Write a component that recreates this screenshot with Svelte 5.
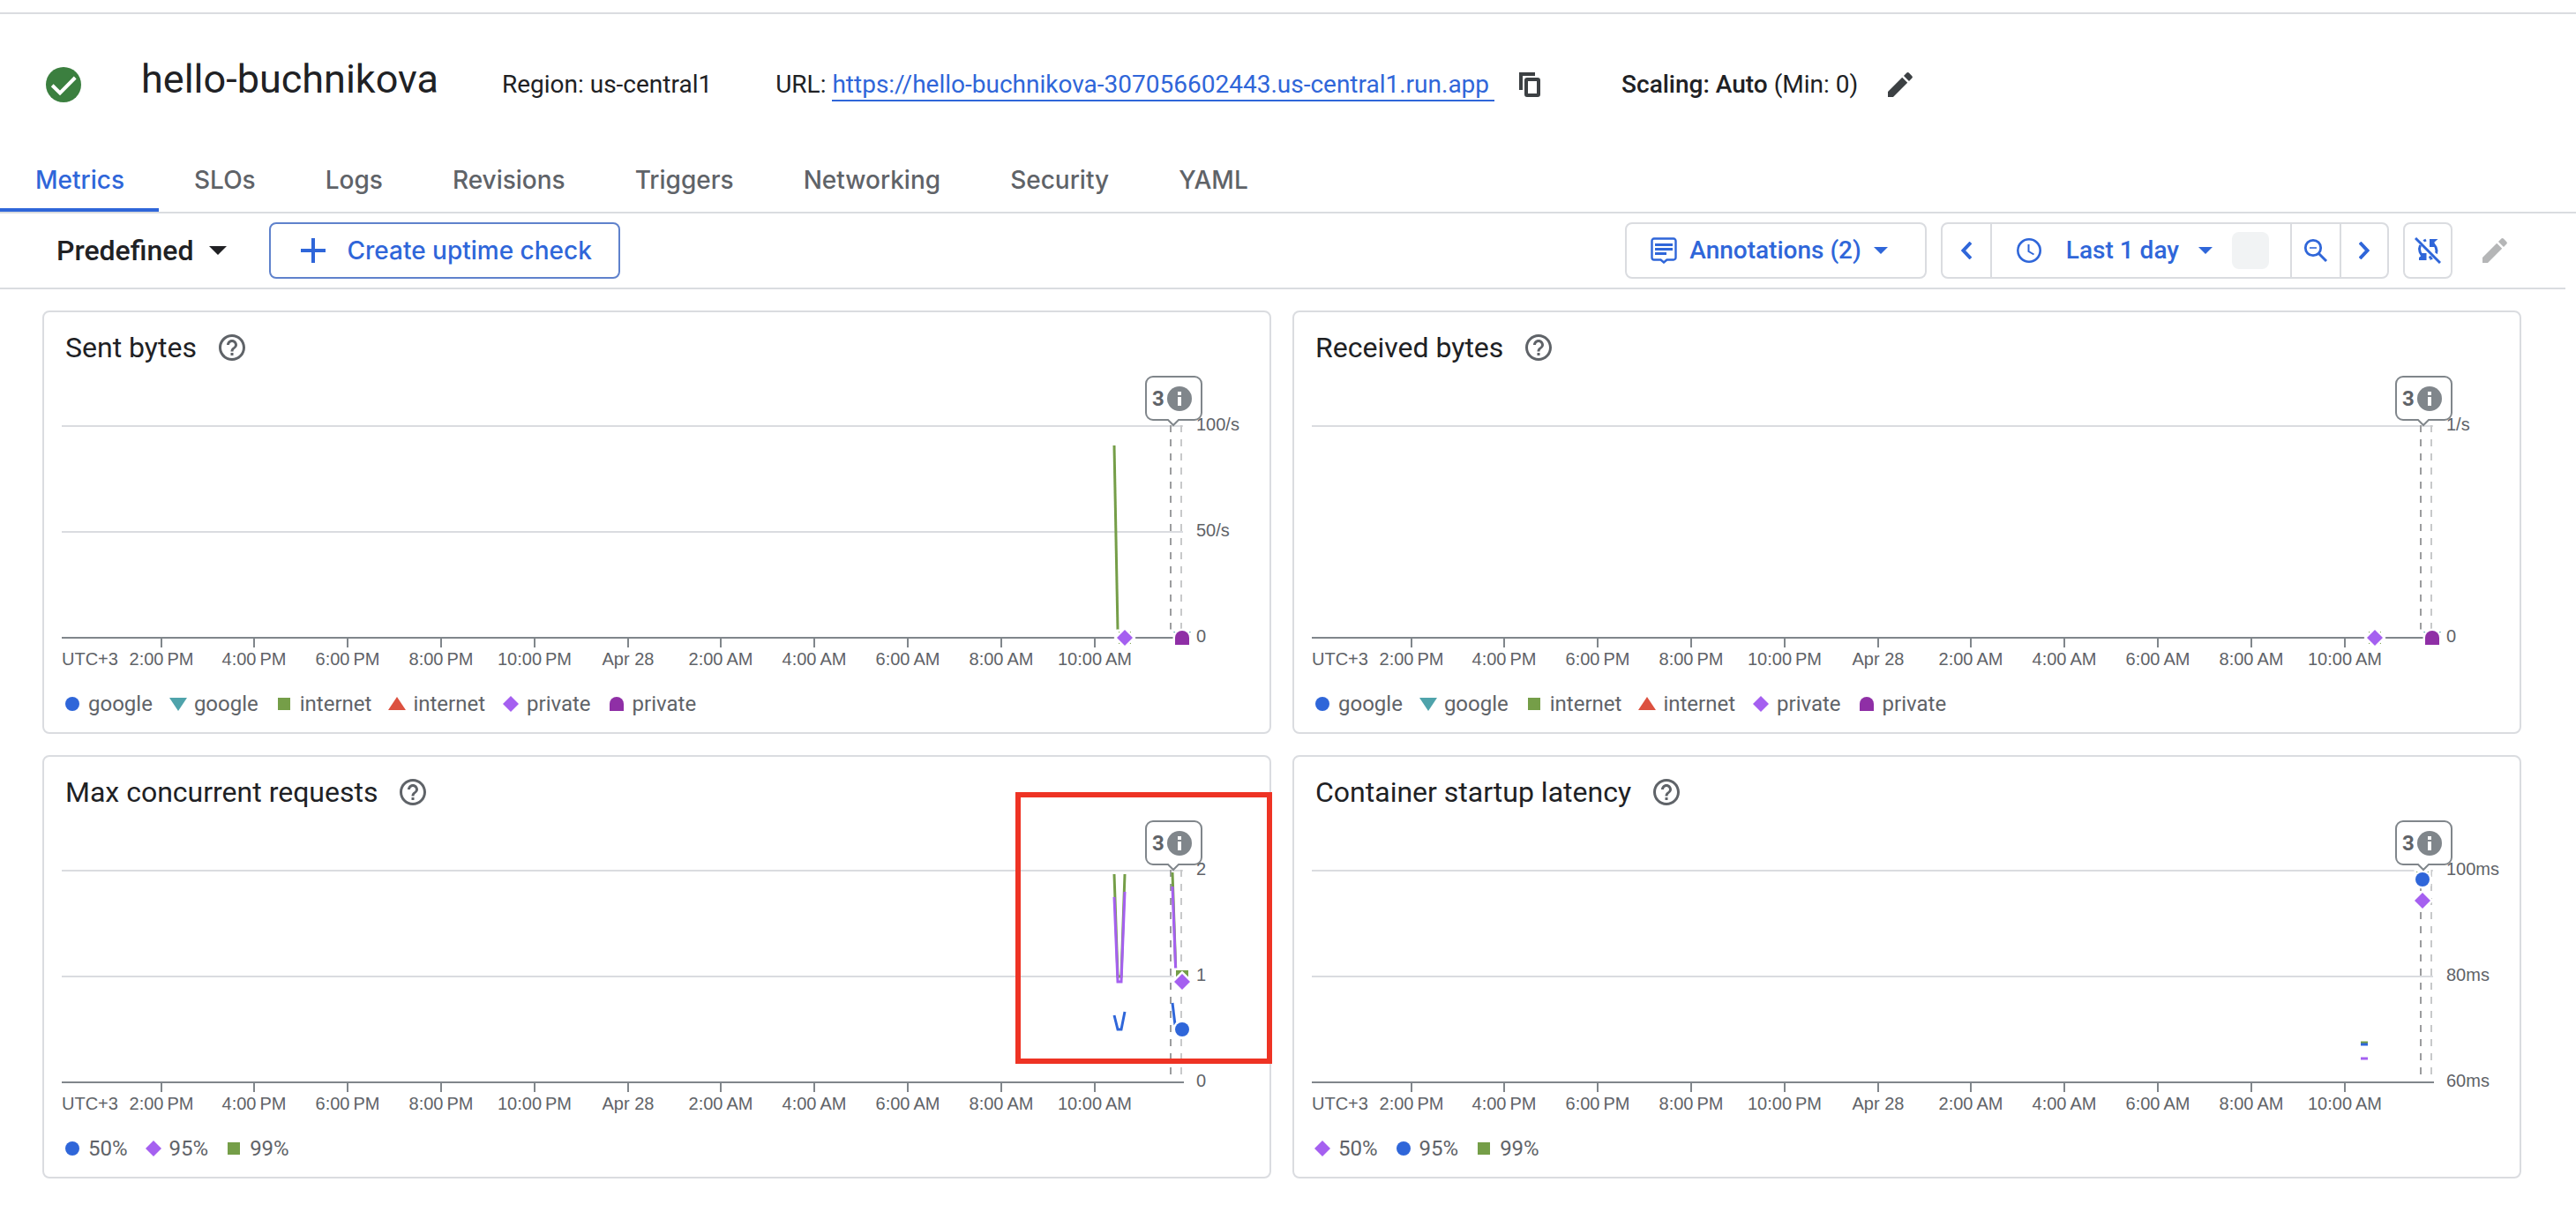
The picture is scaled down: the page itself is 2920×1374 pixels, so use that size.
<script>
  const tabs = ['Metrics', 'SLOs', 'Logs', 'Revisions', 'Triggers', 'Networking', 'Security', 'YAML'];
  let active = $state('Metrics');

  const blue = '#2f66d9';
  const teal = '#4fa3ab';
  const green = '#759e48';
  const red = '#dc5140';
  const violet = '#a560f0';
  const plum = '#8f2fa6';

  const hours = ['2:00', '4:00', '6:00', '8:00', '10:00', 'Apr 28', '2:00', '4:00', '6:00', '8:00', '10:00'];
  const ticks = hours.map((h, i) => ({
    x: 133 + Math.floor(i * 105.8),
    label: i === 5 ? h : `${h}\u202f${i < 5 ? 'PM' : 'AM'}`
  }));

  const traffic = [
    { shape: 'circle', color: blue, label: 'google' },
    { shape: 'down', color: teal, label: 'google' },
    { shape: 'square', color: green, label: 'internet' },
    { shape: 'up', color: red, label: 'internet' },
    { shape: 'diamond', color: violet, label: 'private' },
    { shape: 'arch', color: plum, label: 'private' }
  ];

  const idle = [
    { shape: 'square', color: green, x: 1225, y: 303 },
    { shape: 'diamond', color: violet, x: 1225, y: 303 },
    { shape: 'down', color: teal, x: 1290, y: 303 },
    { shape: 'arch', color: plum, x: 1290, y: 303 }
  ];

  const charts = [
    {
      title: 'Sent bytes',
      rows: ['100/s', '50/s', '0'],
      lines: [{ color: green, points: '1213,85 1217,294' }],
      marks: idle,
      legend: traffic
    },
    {
      title: 'Received bytes',
      rows: ['1/s', '', '0'],
      lines: [],
      marks: idle,
      legend: traffic
    },
    {
      title: 'Max concurrent requests',
      rows: ['2', '1', '0'],
      lines: [
        { color: green, points: '1213,67 1217,183 1221,183 1225,67' },
        { color: green, points: '1279,65 1283,183 1290,183' },
        { color: violet, points: '1213,93 1217,189 1221,189 1225,87' },
        { color: violet, points: '1279,81 1283,184' },
        { color: blue, points: '1213,227 1217,243 1221,243 1225,223' },
        { color: blue, points: '1279,213 1282,238' }
      ],
      marks: [
        { shape: 'square', color: green, x: 1290, y: 183 },
        { shape: 'diamond', color: violet, x: 1290, y: 189 },
        { shape: 'circle', color: blue, x: 1290, y: 243 }
      ],
      legend: [
        { shape: 'circle', color: blue, label: '50%' },
        { shape: 'diamond', color: violet, label: '95%' },
        { shape: 'square', color: green, label: '99%' }
      ],
      highlight: true
    },
    {
      title: 'Container startup latency',
      rows: ['100ms', '80ms', '60ms'],
      lines: [
        { color: green, points: '1209,258 1217,258' },
        { color: blue, points: '1209,260 1217,260' },
        { color: violet, points: '1209,276 1217,276' }
      ],
      marks: [
        { shape: 'square', color: green, x: 1279, y: 71 },
        { shape: 'circle', color: blue, x: 1279, y: 73 },
        { shape: 'diamond', color: violet, x: 1279, y: 97 }
      ],
      legend: [
        { shape: 'diamond', color: violet, label: '50%' },
        { shape: 'circle', color: blue, label: '95%' },
        { shape: 'square', color: green, label: '99%' }
      ]
    }
  ];
</script>

{#snippet marker(shape, color, x, y)}
  <g transform="translate({x} {y})" fill={color}>
    {#if shape === 'circle'}
      <circle r="8" />
    {:else if shape === 'square'}
      <rect x="-7" y="-7" width="14" height="14" />
    {:else if shape === 'diamond'}
      <path d="M0-9L9 0L0 9L-9 0Z" />
    {:else if shape === 'down'}
      <path d="M-10-7H10L0 8Z" />
    {:else if shape === 'up'}
      <path d="M-10 7H10L0-8Z" />
    {:else}
      <path d="M-8 8V0A8 8 0 0 1 8 0V8Z" />
    {/if}
  </g>
{/snippet}

{#snippet pencil()}
  <svg class="icon" viewBox="0 0 18 18" aria-hidden="true">
    <path d="M2 13v3h3l8.1-8.1-3-3zM15.7 5.300a.9.9 0 0 0 0-1.200L13.900 2.300a.9.9 0 0 0-1.200 0L11 4l3 3z" />
  </svg>
{/snippet}

<div class="page">
  <div class="strip"></div>

  <header>
    <svg class="status" viewBox="0 0 24 24" role="img" aria-label="Healthy">
      <circle cx="12" cy="12" r="10" fill="#3b7f3f" />
      <path d="M5.600 12.400L10 16.700L18.600 8" fill="none" stroke="#fff" stroke-width="2" />
    </svg>
    <h1>hello-buchnikova</h1>
    <p class="region">Region: us-central1</p>
    <p class="url">URL: <a href="https://hello-buchnikova-307056602443.us-central1.run.app">https://hello-buchnikova-307056602443.us-central1.run.app</a></p>
    <button class="plain copy" aria-label="Copy URL">
      <svg width="24" height="28" viewBox="0 0 24 28" fill="none" stroke="#3c4043" aria-hidden="true">
        <path d="M2 20V2H18" stroke-width="4" />
        <rect x="8" y="8" width="14" height="18" rx="1" stroke-width="4" />
      </svg>
    </button>
    <p class="scaling"><b>Scaling: Auto</b> (Min: 0)</p>
    <button class="plain edit" aria-label="Edit scaling">{@render pencil()}</button>
  </header>

  <nav>
    {#each tabs as tab}
      <button class="tab" class:active={tab === active} onclick={() => (active = tab)}>{tab}</button>
    {/each}
  </nav>

  <div class="toolbar">
    <button class="plain predefined">
      Predefined
      <svg width="20" height="10" viewBox="0 0 20 10" aria-hidden="true"><path d="M0 0H20L10 10Z" /></svg>
    </button>
    <button class="box create">
      <svg width="28" height="28" viewBox="0 0 28 28" aria-hidden="true"><path d="M12 0h4v12h12v4H16v12h-4V16H0v-4h12z" /></svg>
      Create uptime check
    </button>

    <button class="box annotations">
      <svg width="30" height="30" viewBox="0 0 30 30" fill="none" stroke="currentColor" aria-hidden="true">
        <path d="M4 1.500H26A2.500 2.500 0 0 1 28.500 4V23A2.500 2.500 0 0 1 26 25.500H18.500L15 28.500L11.500 25.500H4A2.500 2.500 0 0 1 1.500 23V4A2.500 2.500 0 0 1 4 1.500Z" stroke-width="2.400" />
        <path d="M5 8.500H25M5 13.500H25M5 18.500H18" stroke-width="3" />
      </svg>
      Annotations (2)
      <svg class="caret" width="16" height="8" viewBox="0 0 16 8" aria-hidden="true"><path d="M0 0H16L8 8Z" /></svg>
    </button>

    <div class="box range">
      <button class="seg" aria-label="Earlier">
        <svg width="12" height="20" viewBox="0 0 12 20" fill="none" stroke="currentColor" stroke-width="4" aria-hidden="true"><path d="M11 1L2.500 10L11 19" /></svg>
      </button>
      <button class="seg span">
        <svg width="28" height="28" viewBox="0 0 28 28" fill="none" stroke="currentColor" aria-hidden="true">
          <circle cx="14" cy="14" r="12.700" stroke-width="2.600" />
          <path d="M13.500 7V15L19.500 18.500" stroke-width="2" />
        </svg>
        <span>Last 1 day</span>
        <svg class="caret" width="16" height="8" viewBox="0 0 16 8" aria-hidden="true"><path d="M0 0H16L8 8Z" /></svg>
        <i class="chip"></i>
      </button>
      <button class="seg" aria-label="Zoom out">
        <svg width="28" height="28" viewBox="0 0 28 28" fill="none" stroke="currentColor" aria-hidden="true">
          <circle cx="11" cy="11" r="8.700" stroke-width="2.800" />
          <path d="M17 17L26 26" stroke-width="3" />
          <path d="M7 11H15" stroke-width="1.600" />
        </svg>
      </button>
      <button class="seg" aria-label="Later">
        <svg width="12" height="20" viewBox="0 0 12 20" fill="none" stroke="currentColor" stroke-width="4" aria-hidden="true"><path d="M1 1L9.500 10L1 19" /></svg>
      </button>
    </div>

    <button class="box sync" aria-label="Auto refresh off">
      <svg width="30" height="30" viewBox="0 0 30 30" fill="none" stroke="currentColor" aria-hidden="true">
        <path d="M6.500 9A10.500 10.500 0 0 0 11 22.500M10 4.500L13 3M19 6A10.500 10.500 0 0 1 24.500 18.500M17.500 24L18 21.500" stroke-width="3" />
        <path d="M17 2H26.500L22.500 5.500V11H17ZM5 26V23L8 20.500L5.500 18H13.500V26Z" fill="currentColor" stroke="none" />
        <path d="M17.500 20.500V26L21 24.500Z" fill="currentColor" stroke="none" />
        <path d="M3.500 -1L31 26.500" stroke="#fff" stroke-width="2" />
        <path d="M1 1L29 29" stroke-width="3" />
      </svg>
    </button>
    <button class="plain edit off" aria-label="Edit dashboard" disabled>{@render pencil()}</button>
  </div>

  <main>
    {#each charts as chart}
      <section class="card">
        <div class="head">
          <h2>{chart.title}</h2>
          <button class="plain help" aria-label="About {chart.title}">
            <svg class="icon" viewBox="0 0 24 24" aria-hidden="true"><path d="M11 18h2v-2h-2v2zm1-16C6.480 2 2 6.480 2 12s4.480 10 10 10 10-4.480 10-10S17.520 2 12 2zm0 18c-4.410 0-8-3.590-8-8s3.590-8 8-8 8 3.590 8 8-3.590 8-8 8zm0-14c-2.210 0-4 1.790-4 4h2c0-1.100.9-2 2-2s2 .9 2 2c0 2-3 1.750-3 5h2c0-2.250 3-2.500 3-5 0-2.210-1.790-4-4-4z" /></svg>
          </button>
        </div>

        <svg class="plot" viewBox="0 0 1389 350" role="img" aria-label="{chart.title} chart">
          {#each chart.rows as row, i}
            {#if row && i < 2}
              <path class="grid" d="M20 {63 + i * 120}H1291" />
            {/if}
          {/each}
          <path class="axis" d="M20 303H1292" />
          {#each ticks as tick}
            <path class="axis" d="M{tick.x} 304V314" />
            <text x={tick.x} y="334" text-anchor="middle">{tick.label}</text>
          {/each}
          <text x="20" y="334">UTC+3</text>

          <path class="dash" d="M1277 62V294" />
          <path class="dash light" d="M1289 62V294" />

          {#each chart.lines as line}
            <polyline points={line.points} fill="none" stroke={line.color} stroke-width="3" />
          {/each}
          {#each chart.marks as m}
            <g class="halo">{@render marker(m.shape, m.color, m.x, m.y)}</g>
          {/each}

          <path class="callout" d="M1257 7H1304A8 8 0 0 1 1312 15V48A8 8 0 0 1 1304 56H1286L1280 62L1274 56H1257A8 8 0 0 1 1249 48V15A8 8 0 0 1 1257 7Z" />
          <text class="count" x="1256" y="40">3</text>
          <circle cx="1287" cy="32" r="14" fill="#80868b" />
          <path d="M1285 24h4v4h-4zM1285 30h4v10h-4z" fill="#fff" />

          {#each chart.rows as row, i}
            <text x="1306" y={68 + i * 120}>{row}</text>
          {/each}
        </svg>

        <ul>
          {#each chart.legend as item}
            <li>
              <svg width="20" height="20" viewBox="-10 -10 20 20" aria-hidden="true">{@render marker(item.shape, item.color, 0, 0)}</svg>
              {item.label}
            </li>
          {/each}
        </ul>

        {#if chart.highlight}
          <div class="highlight"></div>
        {/if}
      </section>
    {/each}
  </main>
</div>

<style>
  :global(body) {
    background: #fff;
  }
  .page {
    font: 400 28px/36px Roboto, sans-serif;
    color: #202124;
    padding-bottom: 38px;
  }
  .page * {
    box-sizing: border-box;
  }
  h1, h2, p, ul {
    margin: 0;
    padding: 0;
    font-weight: 400;
  }
  button {
    font: inherit;
    color: inherit;
    margin: 0;
    padding: 0;
    border: 0;
    background: none;
    cursor: pointer;
    white-space: nowrap;
  }
  svg {
    display: block;
    flex: none;
  }
  .icon {
    width: 36px;
    height: 36px;
    fill: currentColor;
  }
  .strip {
    height: 16px;
    border-bottom: 2px solid #dadce0;
  }

  header {
    display: flex;
    align-items: baseline;
    height: 160px;
    padding: 48px;
    white-space: nowrap;
  }
  .status {
    width: 48px;
    height: 48px;
    align-self: center;
  }
  h1 {
    margin-left: 64px;
    font-size: 45px;
    line-height: 52px;
  }
  .region {
    margin-left: 72px;
  }
  .url {
    margin-left: 72px;
  }
  .url a {
    display: inline-block;
    color: #2f66d9;
    text-decoration: none;
    border-bottom: 2px solid #2f66d9;
    line-height: 34px;
    padding-right: 6px;
  }
  .copy {
    align-self: center;
    margin-left: 28px;
  }
  .scaling {
    margin-left: 92px;
  }
  b {
    font-weight: 500;
  }
  .edit {
    align-self: center;
    color: #3c4043;
  }
  header .edit {
    margin-left: 30px;
  }

  nav {
    display: flex;
    border-bottom: 2px solid #dadce0;
  }
  .tab {
    height: 64px;
    padding: 0 39px 4px 40px;
    border-bottom: 4px solid transparent;
    font-family: Inter, sans-serif;
    font-weight: 500;
    color: #5f6368;
  }
  .tab.active {
    color: #2f66d9;
    border-color: #2f66d9;
  }

  .toolbar {
    display: flex;
    align-items: center;
    height: 86px;
    margin-right: 12px;
    padding: 0 62px 0 64px;
    border-bottom: 2px solid #dadce0;
    font-weight: 500;
  }
  .toolbar button {
    display: flex;
    align-items: center;
  }
  .predefined {
    gap: 18px;
    font-size: 32px;
  }
  .box {
    height: 64px;
    border: 2px solid #dadce0;
    border-radius: 8px;
    color: #2f66d9;
  }
  .toolbar svg:not([fill]) {
    fill: currentColor;
  }
  .create {
    margin-left: 48px;
    padding: 0 30px 0 34px;
    gap: 24px;
    border-color: #5f82cc;
    font-family: Inter, sans-serif;
  }
  .annotations {
    margin-left: auto;
    padding: 0 42px 0 27px;
    gap: 14px;
  }
  .range {
    display: flex;
    margin-left: 16px;
  }
  .seg {
    width: 56px;
    justify-content: center;
    border-left: 2px solid #dadce0;
  }
  .seg:first-child {
    width: 54px;
    border-left: 0;
  }
  .seg:last-child {
    width: 54px;
  }
  .span {
    width: auto;
    padding: 0 24px 0 28px;
  }
  .span span {
    margin: 0 22px 0 28px;
  }
  .chip {
    width: 42px;
    height: 42px;
    margin-left: 22px;
    border-radius: 8px;
    background: #f1f3f4;
  }
  .sync {
    width: 56px;
    margin-left: 16px;
    justify-content: center;
  }
  .off {
    margin-left: 30px;
    color: #b5b6b7;
  }

  main {
    display: grid;
    grid-template-columns: 1fr 1fr;
    gap: 24px;
    padding: 24px 62px 0 48px;
  }
  .card {
    position: relative;
    border: 2px solid #dadce0;
    border-radius: 8px;
    padding-bottom: 18px;
  }
  .head {
    display: flex;
    align-items: center;
    gap: 22px;
    height: 66px;
    padding: 14px 24px 0;
  }
  h2 {
    font-size: 32px;
    line-height: 36px;
  }
  .help {
    color: #5f6368;
  }
  .plot {
    width: 100%;
    height: auto;
    font-family: "Liberation Sans", sans-serif;
  }
  .plot text {
    font-size: 20px;
    fill: #5f6368;
  }
  .plot .count {
    font: 700 24px Roboto, sans-serif;
  }
  .grid {
    stroke: #dadce0;
    stroke-width: 2;
  }
  .axis {
    stroke: #80868b;
    stroke-width: 2;
  }
  .dash {
    stroke: #9b9c9e;
    stroke-width: 2;
    stroke-dasharray: 8 8;
  }
  .light {
    stroke: #c8c9ca;
  }
  .halo {
    stroke: #fff;
    stroke-width: 5;
    paint-order: stroke;
  }
  .callout {
    fill: #fff;
    stroke: #80868b;
    stroke-width: 2;
  }
  ul {
    display: flex;
    gap: 19px;
    margin-top: 14px;
    padding: 0 22px;
    list-style: none;
    font-size: 24px;
    line-height: 28px;
    color: #5f6368;
  }
  li {
    display: flex;
    align-items: center;
    gap: 8px;
  }
  .highlight {
    position: absolute;
    top: 40px;
    right: -3px;
    width: 291px;
    height: 308px;
    border: 6px solid #ee3324;
    pointer-events: none;
  }
</style>
